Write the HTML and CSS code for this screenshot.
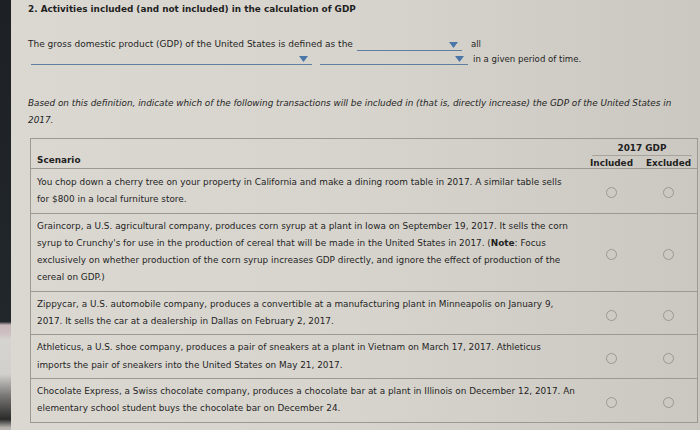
FILE: index.html
```html
<!DOCTYPE html>
<html>
<head>
<meta charset="utf-8">
<link rel="stylesheet" href="styles.css">
</head>
<body>
<div class="screen">
  <div class="bezel"></div>
  <div class="page">
    <div class="title">2. Activities included (and not included) in the calculation of GDP</div>
    <div class="def">
      <div class="def-line one">
        <span>The gross domestic product (GDP) of the United States is defined as the</span>
        <span class="dd w1"><svg width="9" height="6" viewBox="0 0 9 6"><path d="M0 0H9L4.5 6Z" fill="#4a76a8"/></svg></span>
        <span class="after">all</span>
      </div>
      <div class="def-line two">
        <span class="dd w2"><svg width="9" height="6" viewBox="0 0 9 6"><path d="M0 0H9L4.5 6Z" fill="#4a76a8"/></svg></span>
        <span class="dd w3"><svg width="9" height="6" viewBox="0 0 9 6"><path d="M0 0H9L4.5 6Z" fill="#4a76a8"/></svg></span>
        <span class="after">in a given period of time.</span>
      </div>
    </div>
    <p class="intro">Based on this definition, indicate which of the following transactions will be included in (that is, directly increase) the GDP of the United States in<br>2017.</p>
    <div class="table">
      <div class="head">
        <div class="scn-head">Scenario</div>
        <div class="gdp-head">
          <div class="gdp-title">2017 GDP</div>
          <div class="gdp-cols"><span>Included</span><span>Excluded</span></div>
        </div>
      </div>
      <div class="row">
        <div class="scn">You chop down a cherry tree on your property in California and make a dining room table in 2017. A similar table sells<br>for $800 in a local furniture store.</div>
        <div class="opt"><span class="radio"></span></div>
        <div class="opt"><span class="radio"></span></div>
      </div>
      <div class="row">
        <div class="scn">Graincorp, a U.S. agricultural company, produces corn syrup at a plant in Iowa on September 19, 2017. It sells the corn<br>syrup to Crunchy's for use in the production of cereal that will be made in the United States in 2017. (<b>Note</b>: Focus<br>exclusively on whether production of the corn syrup increases GDP directly, and ignore the effect of production of the<br>cereal on GDP.)</div>
        <div class="opt"><span class="radio"></span></div>
        <div class="opt"><span class="radio"></span></div>
      </div>
      <div class="row">
        <div class="scn">Zippycar, a U.S. automobile company, produces a convertible at a manufacturing plant in Minneapolis on January 9,<br>2017. It sells the car at a dealership in Dallas on February 2, 2017.</div>
        <div class="opt"><span class="radio"></span></div>
        <div class="opt"><span class="radio"></span></div>
      </div>
      <div class="row">
        <div class="scn">Athleticus, a U.S. shoe company, produces a pair of sneakers at a plant in Vietnam on March 17, 2017. Athleticus<br>imports the pair of sneakers into the United States on May 21, 2017.</div>
        <div class="opt"><span class="radio"></span></div>
        <div class="opt"><span class="radio"></span></div>
      </div>
      <div class="row">
        <div class="scn">Chocolate Express, a Swiss chocolate company, produces a chocolate bar at a plant in Illinois on December 12, 2017. An<br>elementary school student buys the chocolate bar on December 24.</div>
        <div class="opt"><span class="radio"></span></div>
        <div class="opt"><span class="radio"></span></div>
      </div>
    </div>
  </div>
</div>
</body>
</html>
```
FILE: styles.css
```css
html, body {
  margin: 0;
  padding: 0;
  width: 700px;
  height: 430px;
  overflow: hidden;
}
body {
  font-family: "DejaVu Sans", Verdana, sans-serif;
  color: #1f1f1f;
}
.screen {
  display: flex;
  width: 700px;
  height: 430px;
  background: linear-gradient(to right, #dbd8d2 0%, #d7d4cd 50%, #cbc8c1 100%);
}
.bezel {
  width: 11px;
  flex: none;
  background: linear-gradient(to bottom, #1d2125 0%, #22272b 74.8%, #c7b6bb 75.6%, #cdbfc2 77.5%, #d6d4d0 79%, #d2d0cc 87%, #7a7876 92%, #2a2a2a 97.5%, #b9b6b1 99.5%);
}
.page {
  flex: 1;
  padding: 3px 0 0 17px;
}
.title {
  font-weight: bold;
  font-size: 8.9px;
  line-height: 12px;
}
.def {
  margin-top: 20px;
  font-size: 9px;
}
.def-line {
  display: flex;
  align-items: flex-end;
  height: 14px;
}
.def-line.two {
  margin-top: 2px;
  padding-left: 3px;
}
.dd {
  display: flex;
  justify-content: flex-end;
  align-items: center;
  height: 12px;
  border-bottom: 1px solid #5f7f9f;
  padding-right: 4px;
  box-sizing: border-box;
}
.w1 { width: 105px; margin-left: 4px; margin-bottom: -2px; }
.w2 { width: 281px; }
.w3 { width: 148px; margin-left: 8px; }
.after { margin-left: 9px; font-size: 8.6px; }
.two .after { margin-left: 5px; margin-bottom: 1px; }
.intro {
  margin: 30px 0 0 0;
  font-style: italic;
  font-size: 8.85px;
  line-height: 17px;
}
.table {
  margin: 9px 0 0 2px;
  width: 666px;
  border: 1px solid #9c9993;
  font-size: 8.9px;
}
.head {
  display: flex;
  height: 29px;
  border-bottom: 1px solid #9c9993;
}
.scn-head {
  flex: 1;
  font-weight: bold;
  display: flex;
  align-items: flex-end;
  padding: 0 0 3px 6px;
}
.gdp-head {
  width: 114px;
  display: flex;
  flex-direction: column;
  align-items: center;
  font-weight: bold;
}
.gdp-title {
  width: 100px;
  text-align: center;
  margin-left: 4px;
  padding: 4px 0 2px;
  border-bottom: 1px solid #a6a39d;
  line-height: 10px;
}
.gdp-cols {
  display: flex;
  width: 114px;
  line-height: 12px;
  margin-top: 1px;
}
.gdp-cols span {
  width: 57px;
  text-align: center;
}
.row {
  display: flex;
  border-top: 1px solid #9c9993;
}
.head + .row { border-top: none; }
.head + .row .scn { padding-top: 5px; padding-bottom: 4px; }
.scn {
  flex: 1;
  padding: 4px 6px;
  line-height: 17.3px;
  white-space: nowrap;
}
.opt {
  width: 57px;
  display: flex;
  align-items: center;
  justify-content: center;
}
.radio {
  width: 9px;
  height: 9px;
  border: 1px solid #9a9893;
  border-radius: 50%;
  margin-top: 4px;
}
```
